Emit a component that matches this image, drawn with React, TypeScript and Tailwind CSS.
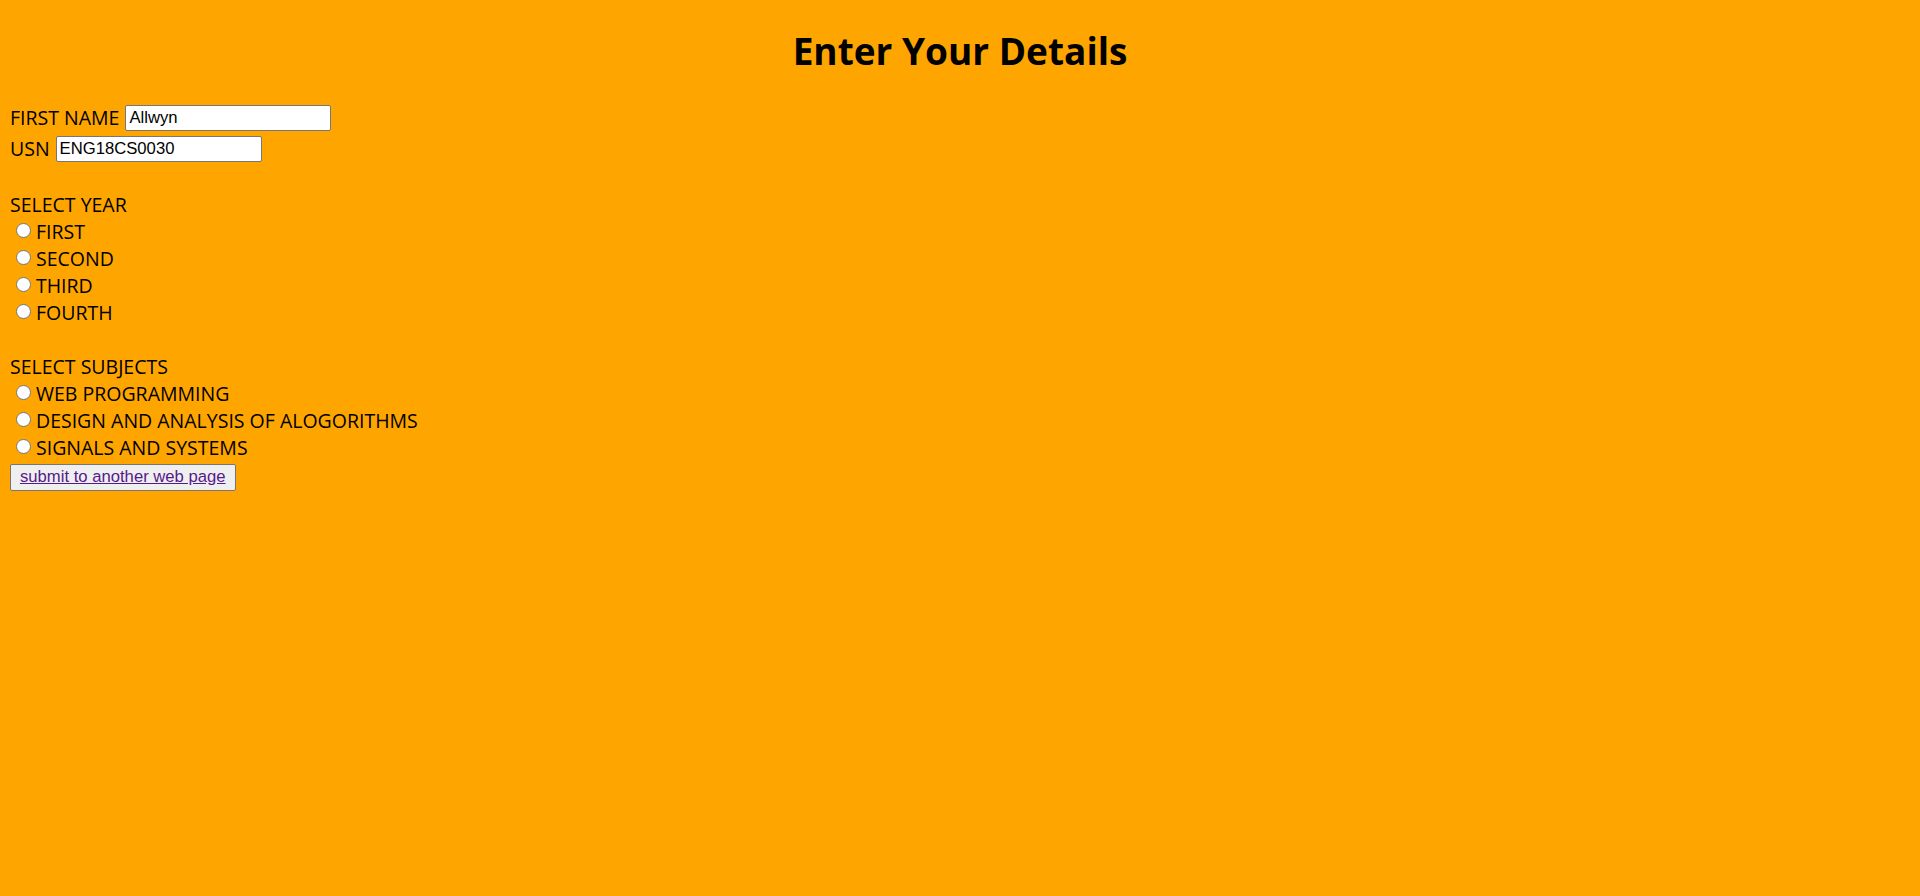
import React from "react";

const years = ["FIRST", "SECOND", "THIRD", "FOURTH"];
const subjects = ["WEB PROGRAMMING", "DESIGN AND ANALYSIS OF ALOGORITHMS", "SIGNALS AND SYSTEMS"];

function Radio({ label, name }: { label: string; name: string }) {
  return (
    <label className="flex h-[27px] items-center">
      <input
        type="radio"
        name={name}
        className="ml-[6px] mr-[5px] -mt-[3px] h-[15px] w-[15px] appearance-none rounded-full border border-[#767676] bg-white"
      />
      <span>{label}</span>
    </label>
  );
}

function Field({ label, value }: { label: string; value: string }) {
  return (
    <div className="flex h-[31px] items-center">
      <span>{label}</span>
      <input
        type="text"
        defaultValue={value}
        className="ml-[6px] h-[26px] w-[206px] rounded-[2px] border border-[#767676] bg-white pl-[3px] font-['Liberation_Sans',Arial,sans-serif] text-[16.67px] text-black outline-none"
      />
    </div>
  );
}

export default function App() {
  return (
    <div className="min-h-screen bg-[#ffa500] px-[10px] font-['Open_Sans',sans-serif] text-[19.5px] leading-[27px] text-black">
      <h1 className="pb-[25px] pt-[24px] text-center text-[37px] font-bold leading-[53px]">Enter Your Details</h1>

      <Field label="FIRST NAME" value="Allwyn" />
      <Field label="USN" value="ENG18CS0030" />

      <div className="h-[27px]" />
      <div className="h-[27px]">SELECT YEAR</div>
      {years.map((y) => (
        <Radio key={y} label={y} name="year" />
      ))}

      <div className="h-[27px]" />
      <div className="h-[27px]">SELECT SUBJECTS</div>
      {subjects.map((s) => (
        <Radio key={s} label={s} name="subject" />
      ))}

      <button className="mt-[1px] h-[27px] rounded-[2px] border border-[#767676] bg-[#efefef] px-[9px] font-['Liberation_Sans',Arial,sans-serif] text-[16.67px] leading-none">
        <span className="text-[#551a8b] underline">submit to another web page</span>
      </button>
    </div>
  );
}
